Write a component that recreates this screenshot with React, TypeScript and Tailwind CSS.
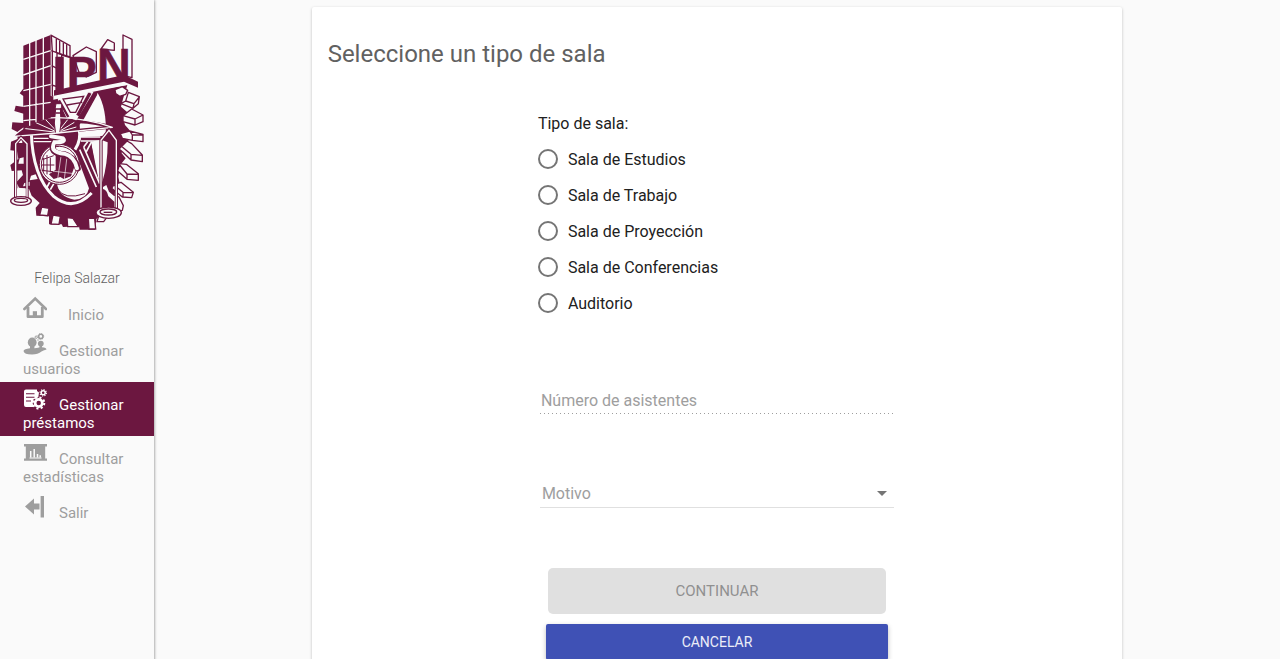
import { useState, type ReactNode } from "react";

function Emblem() {
  const dark = "#6c1740";
  const light = "#fafafa";
  return (
    <svg viewBox="30 24 408 600" className="h-[200px] w-[136px]" role="img" aria-label="IPN">
      {/* gear body and left teeth */}
      <path
        fill={dark}
        d="M62 205 72 192 90 190 165 216 385 180 372 222 366 245 385 262 372 275 378 300 392 316 390 345 372 360 368 385 380 400 364 420 358 455 362 475 348 500 345 530 330 560 300 575 292 582 288 614 242 614 240 604 192 606 188 598 150 598 150 574 112 572 110 548 122 534 98 512 90 492 60 488 52 472 72 450 68 436 38 438 34 420 58 402 54 378 34 376 36 350 56 342 54 320 38 312 40 292 74 294 74 266 46 258 50 242 74 246 74 214Z"
      />
      {/* extruded teeth on the right */}
      <g fill={light} stroke={dark} strokeWidth="4" strokeLinejoin="round">
        <path d="M348 194 370 185 386 196 380 208 362 214 350 206Z" />
        <path d="M388 202 421 215 418 236 402 250 366 236 380 228ZM380 228 405 236 421 216M405 236 402 250" />
        <path d="M372 272 398 252 432 270 432 290 408 300 372 290ZM372 272 408 282 432 270M408 282V299" />
        <path d="M392 318 432 328 432 350 400 346 370 340 364 326ZM392 318 400 330 432 330M400 330V346" />
        <path d="M370 362 384 348 398 356 430 390 430 410 396 405 370 380 360 372ZM370 366 396 388 430 391M396 388V405" />
        <path d="M362 416 382 418 418 446 418 466 384 463 356 438ZM362 420 384 447 418 448M384 447V463" />
        <path d="M345 478 366 472 403 502 398 518 370 516 338 490ZM345 480 372 502 403 503M372 502V516" />
        <path d="M345 510 360 516 373 542 370 556 350 558 332 530Z" />
      </g>
      {/* faces of the lower teeth */}
      <g fill={light} stroke={dark} strokeWidth="4">
        <path d="M128 546 150 550 146 572 122 570ZM162 570 184 574 180 598 156 597ZM204 578 222 580 238 605H206ZM268 580 287 580 290 612H270Z" />
        <path d="M300 570 326 574 314 590 294 590Z" />
      </g>
      <g fill={light}>
        <path d="M96 452 110 448 116 462 92 466ZM62 400 74 397V416H58ZM60 340 70 338V354H56ZM92 470 76 474 72 484 92 482Z" />
      </g>
      {/* upper opening: braces and the right lens */}
      <path fill={light} d="M176 222 184 213 284 200 232 286 206 286Z" />
      <path fill={light} d="M296 204Q324 250 320 332L246 336 240 302Z" />
      <path fill="none" stroke={dark} strokeWidth="4" d="M192 222 214 262H230L254 214ZM204 240 250 232" />
      <path d="M180 226 208 276" stroke={dark} strokeWidth="7" />
      <path d="M273 204 236 272" stroke={dark} strokeWidth="10" />
      <path d="M291 206 246 288" stroke={dark} strokeWidth="9" />
      <path d="M163 224V276L180 270V232Z" fill={dark} />
      {/* shield ring */}
      <path fill="none" stroke={light} strokeWidth="9" d="M97 322Q100 454 164 514Q222 562 278 504" />
      <path fill="none" stroke={light} strokeWidth="4" d="M104 340H150M104 350H160M246 348H306M246 336H304" />
      <path fill={light} d="M326 352 306 344 276 350Q286 420 300 470L310 470Q326 420 326 352Z" />
      <path fill={dark} d="M244 352 276 352 300 470 292 500 270 500 270 486Z" />
      <path fill={light} d="M174 474Q178 516 226 524Q264 522 270 490L240 410 190 430Z" />
      <path fill="none" stroke={dark} strokeWidth="3" d="M176 492Q196 526 258 506" />
      <path fill="none" stroke={light} strokeWidth="5" d="M242 374 292 486M254 366 302 476M262 380 278 350M254 366 266 350M142 490 154 468M154 494 168 470" />
      <path fill="none" stroke={light} strokeWidth="9" d="M240 312Q248 344 228 374" />
      {/* globe with the serpent */}
      <circle cx="181" cy="418" r="60" fill={light} stroke={dark} strokeWidth="3" />
      <circle cx="181" cy="418" r="54" fill="none" stroke={dark} strokeWidth="3" />
      <path fill={dark} d="M170 374 206 396 222 404 228 420 216 454 194 462 184 456 164 462 150 448 170 434Z" />
      <path fill="none" stroke={light} strokeWidth="2" d="M158 438 226 446M188 380 176 462M204 395 196 462" />
      <path fill="none" stroke={dark} strokeWidth="3" d="M126 420H166M134 398V440M144 390V448M154 398V442M130 404 164 392M128 436 162 440" />
      <path fill="none" stroke={dark} strokeWidth="19" strokeLinecap="round" d="M156 334 192 340Q204 352 166 352Q148 384 196 388Q226 396 236 430" />
      <path fill="none" stroke={light} strokeWidth="12" strokeLinecap="round" d="M156 334 192 340Q204 352 166 352Q150 382 196 386Q226 394 234 430" />
      {/* central column and beam of the balance */}
      <path fill={dark} d="M42 334Q108 276 176 276Q256 278 240 318L176 326Z" />
      <path fill="none" stroke={light} strokeWidth="3" d="M176 322 72 310M176 322 104 290M176 322 140 284M176 322 206 284M176 322 226 292M176 322 232 306" />
      <path fill={light} stroke={dark} strokeWidth="3" d="M171 236H188V250H184L186 294 182 326H170L166 294 170 252H168Z" />
      <path fill="none" stroke={dark} strokeWidth="4" d="M164 252H192M170 264H190" />
      <path fill="none" stroke={dark} strokeWidth="9" d="M240 290Q290 292 340 306L240 316" />
      <path fill="none" stroke={light} strokeWidth="4" strokeLinejoin="round" d="M42 334Q108 276 176 278Q264 280 340 307L176 324Z" />
      {/* hanging pans */}
      <path fill="none" stroke={dark} strokeWidth="10" d="M50 522V356L66 338 84 356V522M306 558V346L330 316 352 346V560" />
      <path fill="none" stroke={light} strokeWidth="4" d="M50 522V356L66 338 84 356V522M306 558V346L330 316 352 346V560" />
      <path fill={light} d="M54 490H80V514H54Z" />
      <path fill={light} d="M312 486 322 480 330 500 346 514V530L312 510Z" />
      <path fill={dark} d="M312 492Q324 494 328 514L346 530V546H312Z" />
      <g fill={light} stroke={dark} strokeWidth="4">
        <ellipse cx="66" cy="528" rx="31" ry="13" />
        <ellipse cx="66" cy="526" rx="20" ry="6" />
        <ellipse cx="329" cy="563" rx="38" ry="17" />
        <ellipse cx="328" cy="561" rx="25" ry="9" />
      </g>
      <path d="M314 562H340" stroke={dark} strokeWidth="4" />
      {/* tower */}
      <path fill={dark} d="M73 62 155 30V280Q112 288 73 314Z" />
      <path fill="none" stroke={light} strokeWidth="4" d="M92 50V302M111 43V292M133 34V284M73 103 155 77M73 150 155 122M73 197 155 178M73 244 155 232M73 287 110 283" />
      <path fill={light} stroke={dark} strokeWidth="4" d="M157 31 213 62V96L174 84V216L160 213V80Z" />
      <path fill="none" stroke={dark} strokeWidth="4" d="M172 42V84M182 47V88M193 53V92M203 58V94M157 77 213 98M158 122 174 130M158 180 174 185" />
      {/* plinth and lettering blocks */}
      <path fill={light} d="M163 206 378 158 395 178 163 224Z" />
      <path fill={dark} d="M165 196 375 150 417 170V188L375 170 165 212Z" />
      <path fill={light} stroke={dark} strokeWidth="4" strokeLinejoin="round" d="M188 90 214 98V188L188 194ZM222 92 262 66 292 80V142L262 156 240 142ZM306 72 326 44 346 54V76ZM372 66V30L399 43V158L374 152Z" />
      <g fill={dark} stroke={dark} strokeWidth="2" fontWeight="700" fontFamily="'Liberation Sans Narrow', 'Liberation Sans', sans-serif">
        <text x="160" y="204" fontSize="158">I</text>
        <text x="205" y="190" fontSize="132">P</text>
        <text x="294" y="168" fontSize="140">N</text>
      </g>
    </svg>
  );
}

const iconClass = "inline-block size-6 align-baseline";

function HomeIcon() {
  return (
    <svg viewBox="0 0 24 24" className={iconClass} fill="none" stroke="currentColor" aria-hidden="true">
      <path d="M1.4 13 12.2 2.5 23 13" strokeWidth="2.6" strokeLinecap="round" />
      <path d="M5 11V20.7H19.3V11" strokeWidth="2.8" strokeLinejoin="round" />
      <path d="M9.8 21V15.2H14V21Z" fill="currentColor" stroke="none" />
    </svg>
  );
}

function UsersIcon() {
  return (
    <svg viewBox="0 0 24 24" className={iconClass} fill="currentColor" aria-hidden="true">
      <ellipse cx="9.2" cy="10.4" rx="4.4" ry="4.8" />
      <path d="M7 13.4H11.4V16.2Q16 15.8 16.5 15.2V12H19V15.2Q23.5 15.6 23.5 17.4Q20 18.4 18.5 19.4Q15 22.4 9 22.4Q1 22.4 .5 18.9Q1 16.9 7 16.2Z" />
      <ellipse cx="17.8" cy="11.6" rx="2.9" ry="2.9" />
      <circle cx="17.8" cy="4.4" r="2.1" fill="none" stroke="currentColor" strokeWidth="1.5" />
      <circle cx="17.8" cy="4.4" r="2.9" fill="none" stroke="currentColor" strokeWidth="1" strokeDasharray="1.1 1.2" />
      <circle cx="13.2" cy="5.2" r="1.2" fill="none" stroke="currentColor" />
      <circle cx="15" cy="8" r=".7" />
    </svg>
  );
}

function LoansIcon() {
  return (
    <svg viewBox="0 0 24 24" className={iconClass} fill="currentColor" aria-hidden="true">
      <path d="M3 3.5H14V4.9L16 6.5 15.3 11.2 10.3 13.5 9.7 17.8 11 21H3Q1 21 1 19V5.5Q1 3.5 3 3.5Z" />
      <path d="M3 7.7H11.5M3 11.3H11.5M3 15H8" className="stroke-[#6c1740]" strokeWidth="1.1" />
      <circle cx="15.7" cy="17" r="3.6" fill="none" stroke="currentColor" strokeWidth="2.7" />
      <circle cx="15.7" cy="17" r="5.6" fill="none" stroke="currentColor" strokeWidth="2" strokeDasharray="2.1 2.3" />
      <circle cx="20.2" cy="6.8" r="2" fill="none" stroke="currentColor" strokeWidth="1.5" />
      <circle cx="20.2" cy="6.8" r="3.2" fill="none" stroke="currentColor" strokeWidth="1.2" strokeDasharray="1.2 1.3" />
    </svg>
  );
}

function StatsIcon() {
  return (
    <svg viewBox="0 0 24 24" className={iconClass} fill="currentColor" aria-hidden="true">
      <path d="M1 4H24V6.5H22.2V18.5H24V20.7H1V18.5H2.8V6.5H1Z" />
      <path d="M7.7 17.5V11M11.2 17.5V9M14.5 17.5V14M17.2 17.5V15.3" className="stroke-[#fafafa]" strokeWidth="1.5" />
      <path d="M6.5 18H18.5" className="stroke-[#fafafa]" strokeWidth="1" />
    </svg>
  );
}

function ExitIcon() {
  return (
    <svg viewBox="0 0 24 24" className={iconClass} fill="currentColor" aria-hidden="true">
      <path d="M2 12.5 11 4.5V9.5H16.5V15.5H11V20.5ZM17.6 2H21V23.5H17.6Z" />
    </svg>
  );
}

type Item = { label: string; icon: ReactNode; gap: string };

const items: Item[] = [
  { label: "Inicio", icon: <HomeIcon />, gap: "mr-[21px]" },
  { label: "Gestionar usuarios", icon: <UsersIcon />, gap: "mr-3" },
  { label: "Gestionar préstamos", icon: <LoansIcon />, gap: "mr-3" },
  { label: "Consultar estadísticas", icon: <StatsIcon />, gap: "mr-3" },
  { label: "Salir", icon: <ExitIcon />, gap: "mr-3" },
];

const rooms = ["Sala de Estudios", "Sala de Trabajo", "Sala de Proyección", "Sala de Conferencias", "Auditorio"];

export default function App() {
  const [room, setRoom] = useState("");
  const [reason, setReason] = useState("");
  const active = "Gestionar préstamos";

  return (
    <div className="flex min-h-screen bg-[#fafafa] font-['Roboto',sans-serif] text-[#212121]">
      <aside className="w-[154px] shrink-0 bg-[#fafafa] pt-[33px] shadow-[0_0_3px_rgba(0,0,0,0.55)]">
        <div className="flex justify-center">
          <Emblem />
        </div>
        <p className="mt-9 text-center text-sm leading-[18px] font-light text-[#616161]">Felipa Salazar</p>
        <nav className="mt-[5px]">
          <ul>
            {items.map((item) => (
              <li key={item.label}>
                <a
                  href="#"
                  aria-current={item.label === active ? "page" : undefined}
                  className={
                    item.label === active
                      ? "block bg-[#6c1740] py-1 pr-4 pl-[23px] text-[15px] leading-[18px] text-white"
                      : "block py-1 pr-4 pl-[23px] text-[15px] leading-[18px] text-[#9e9e9e]"
                  }
                >
                  <span className={item.gap}>{item.icon}</span>
                  {item.label}
                </a>
              </li>
            ))}
          </ul>
        </nav>
      </aside>

      <main className="flex min-w-0 grow justify-center pt-[7px]">
        <section className="w-[72%] rounded-xs bg-white px-4 pt-[31px] pb-8 shadow-[0_1px_3px_rgba(0,0,0,0.25)]">
          <h1 className="text-2xl leading-8 font-normal text-[#616161]">Seleccione un tipo de sala</h1>

          <form className="mx-auto mt-[42px] w-[46%]" onSubmit={(e) => e.preventDefault()}>
            <fieldset>
              <legend className="text-base leading-6">Tipo de sala:</legend>
              {rooms.map((name) => (
                <label key={name} className="mt-3 flex items-start gap-[10px] text-base leading-6">
                  <input
                    type="radio"
                    name="sala"
                    value={name}
                    checked={room === name}
                    onChange={() => setRoom(name)}
                    className="mt-px size-5 appearance-none rounded-full border-2 border-[#757575] checked:border-[6px] checked:border-[#3f51b5]"
                  />
                  {name}
                </label>
              ))}
            </fieldset>

            <div className="mt-[71px] px-[2px]">
              <input
                type="number"
                disabled
                aria-label="Número de asistentes"
                placeholder="Número de asistentes"
                className="block h-[27px] w-full bg-[linear-gradient(to_right,#9e9e9e_1px,transparent_1px)] bg-[length:4px_1px] bg-bottom-left bg-repeat-x px-px text-base leading-6 placeholder:text-[#9e9e9e] placeholder:opacity-100"
              />
              <div className="relative mt-[67px]">
                <select
                  aria-label="Motivo"
                  value={reason}
                  onChange={(e) => setReason(e.target.value)}
                  className="block h-[27px] w-full appearance-none border-b border-[#e0e0e0] px-[2px] text-base leading-6 text-[#9e9e9e]"
                >
                  <option value="">Motivo</option>
                </select>
                <svg viewBox="0 0 10 5" className="pointer-events-none absolute top-[10px] right-[7px] h-[5px] w-[10px] fill-[#757575]" aria-hidden="true">
                  <path d="M0 0H10L5 5Z" />
                </svg>
              </div>
            </div>

            <div className="mt-[60px] px-2">
              <div className="px-[2px]">
                <button type="submit" disabled className="block h-[46px] w-full rounded-[5px] bg-[#e0e0e0] text-[15px] text-[#909090]">
                  CONTINUAR
                </button>
              </div>
              <button type="button" className="mt-[10px] block h-9 w-full rounded-xs bg-[#3f51b5] text-sm text-white/90 shadow-[0_2px_5px_rgba(0,0,0,0.26)]">
                CANCELAR
              </button>
            </div>
          </form>
        </section>
      </main>
    </div>
  );
}
